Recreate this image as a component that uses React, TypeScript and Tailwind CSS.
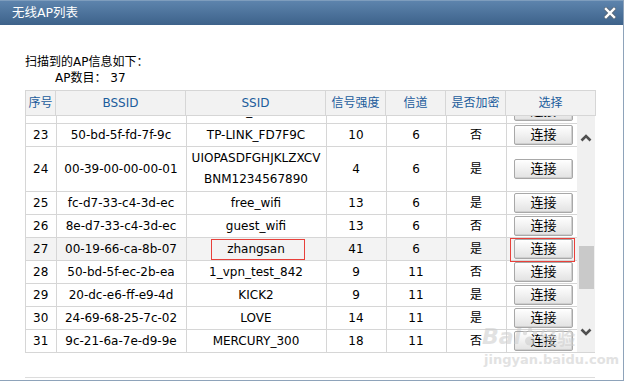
import React from 'react';

type Row = {
  no: string;
  bssid: string;
  ssid: React.ReactNode;
  signal: string;
  channel: string;
  enc: string;
  tall?: boolean;
  marked?: boolean;
};

const rows: Row[] = [
  { no: '22', bssid: '00-1d-0f-3a-22-16', ssid: 'wifi_home', signal: '7', channel: '6', enc: '是' },
  { no: '23', bssid: '50-bd-5f-fd-7f-9c', ssid: 'TP-LINK_FD7F9C', signal: '10', channel: '6', enc: '否' },
  {
    no: '24',
    bssid: '00-39-00-00-00-01',
    ssid: (
      <>
        UIOPASDFGHJKLZXCV
        <br />
        BNM1234567890
      </>
    ),
    signal: '4',
    channel: '6',
    enc: '是',
    tall: true,
  },
  { no: '25', bssid: 'fc-d7-33-c4-3d-ec', ssid: 'free_wifi', signal: '13', channel: '6', enc: '是' },
  { no: '26', bssid: '8e-d7-33-c4-3d-ec', ssid: 'guest_wifi', signal: '13', channel: '6', enc: '否' },
  { no: '27', bssid: '00-19-66-ca-8b-07', ssid: 'zhangsan', signal: '41', channel: '6', enc: '是', marked: true },
  { no: '28', bssid: '50-bd-5f-ec-2b-ea', ssid: '1_vpn_test_842', signal: '9', channel: '11', enc: '否' },
  { no: '29', bssid: '20-dc-e6-ff-e9-4d', ssid: 'KICK2', signal: '9', channel: '11', enc: '是' },
  { no: '30', bssid: '24-69-68-25-7c-02', ssid: 'LOVE', signal: '14', channel: '11', enc: '是' },
  { no: '31', bssid: '9c-21-6a-7e-d9-9e', ssid: 'MERCURY_300', signal: '18', channel: '11', enc: '否' },
  { no: '32', bssid: 'c8-3a-35-0b-11-60', ssid: 'Tenda_0B1160', signal: '5', channel: '1', enc: '是' },
];

const headers = ['序号', 'BSSID', 'SSID', '信号强度', '信道', '是否加密', '选择'];

const ConnectButton = () => (
  <button className="w-[59px] h-[20px] border border-[#a8a8a8] rounded-[2px] bg-linear-to-b from-white to-[#e2e2e2] shadow-[inset_-1px_-1px_0_#cfcfcf] text-[13px] leading-[18px] text-black">
    连接
  </button>
);

const CloseIcon = () => (
  <svg width="12" height="12" viewBox="0 0 12 12">
    <path d="M2 2 L10 10 M10 2 L2 10" stroke="#5b6b7c" strokeWidth="4.2" strokeLinecap="square" />
    <path d="M2 2 L10 10 M10 2 L2 10" stroke="#ffffff" strokeWidth="2.4" strokeLinecap="square" />
  </svg>
);

const Chevron = ({ up }: { up?: boolean }) => (
  <svg width="12" height="8" viewBox="0 0 12 8">
    <polyline
      points={up ? '1.5,6.5 6,2 10.5,6.5' : '1.5,1.5 6,6 10.5,1.5'}
      fill="none"
      stroke="#505050"
      strokeWidth="2.6"
    />
  </svg>
);

export default function App() {
  const cell = 'border-r border-b border-[#d6d6d6] text-center p-0 align-middle';

  return (
    <div className="w-[626px] h-[382px] bg-white overflow-hidden font-['DejaVu_Sans','Noto_Sans_CJK_SC',sans-serif]">
      <div className="relative w-[624px] h-[381px] border-r border-b border-[#8ea3ba] flex flex-col">
        {/* Title bar */}
        <div className="h-[25px] shrink-0 flex items-center justify-between pl-[12px] pr-[7px] bg-linear-to-b from-[#5d84ad] to-[#3d628a] border-t border-[#7e9dbd]">
          <span className="text-white text-[12.5px] leading-none">无线AP列表</span>
          <CloseIcon />
        </div>

        <div className="pl-[25px] pt-[29px] text-[12px] text-black">
          <div className="leading-[16px]">扫描到的AP信息如下：</div>
          <div className="leading-[16px] pl-[30px]">AP数目： 37</div>

          {/* Table */}
          <div className="mt-[4px] w-[570px]">
            <table className="table-fixed border-collapse w-[570px]">
              <colgroup>
                <col className="w-[30px]" />
                <col className="w-[130px]" />
                <col className="w-[140px]" />
                <col className="w-[60px]" />
                <col className="w-[60px]" />
                <col className="w-[60px]" />
                <col className="w-[90px]" />
              </colgroup>
              <thead>
                <tr>
                  {headers.map((h) => (
                    <th
                      key={h}
                      className="h-[25px] p-0 border border-[#d6d6d6] bg-[#f2f2f2] text-[#1b5c9c] font-normal text-[12px] text-center whitespace-nowrap"
                    >
                      {h}
                    </th>
                  ))}
                </tr>
              </thead>
            </table>

            <div className="flex h-[237px] border-l border-b border-[#d6d6d6]">
              <div className="w-[552px] overflow-hidden">
                <table className="table-fixed border-collapse w-[552px] -mt-[16px]">
                  <colgroup>
                    <col className="w-[30px]" />
                    <col className="w-[130px]" />
                    <col className="w-[140px]" />
                    <col className="w-[60px]" />
                    <col className="w-[60px]" />
                    <col className="w-[60px]" />
                    <col className="w-[72px]" />
                  </colgroup>
                  <tbody>
                    {rows.map((r) => (
                      <tr key={r.no} className={r.marked ? 'bg-[#f3f3f3]' : ''}>
                        <td className={`${cell} ${r.tall ? 'h-[45px]' : 'h-[23px]'}`}>{r.no}</td>
                        <td className={`${cell} whitespace-nowrap`}>{r.bssid}</td>
                        <td className={`${cell} relative whitespace-nowrap ${r.tall ? 'leading-[21px]' : ''}`}>
                          {r.ssid}
                          {r.marked && (
                            <span className="absolute left-[24px] top-[1px] w-[94px] h-[21px] border border-[#e8403a]" />
                          )}
                        </td>
                        <td className={cell}>{r.signal}</td>
                        <td className={cell}>{r.channel}</td>
                        <td className={cell}>{r.enc}</td>
                        <td className={`${cell} relative`}>
                          <div className="flex justify-center pl-[3px]">
                            <ConnectButton />
                          </div>
                          {r.marked && (
                            <span className="absolute left-[3px] top-[0px] w-[65px] h-[24px] border border-[#e8403a]" />
                          )}
                        </td>
                      </tr>
                    ))}
                  </tbody>
                </table>
              </div>

              {/* Scrollbar */}
              <div className="w-[18px] bg-[#f0f0f0] flex flex-col items-center">
                <div className="mt-[18px] h-[8px] flex items-center">
                  <Chevron up />
                </div>
                <div className="mt-[104px] w-[15px] h-[43px] bg-[#c9c9c9]" />
                <div className="mt-[39px] h-[8px] flex items-center">
                  <Chevron />
                </div>
              </div>
            </div>

            <div className="mt-[24px] h-[1px] bg-[#dcdcdc]" />
          </div>
        </div>

        {/* watermark */}
        <div className="absolute left-[482px] top-[326px] pointer-events-none select-none text-[#cfcfcf] opacity-60">
          <div className="flex items-end leading-none">
            <span className="text-[22px] font-bold italic">Bai</span>
            <svg width="18" height="20" viewBox="0 0 18 20" className="mb-[1px]">
              <circle cx="4" cy="6" r="2.2" fill="#cfcfcf" />
              <circle cx="9" cy="3" r="2.2" fill="#cfcfcf" />
              <circle cx="14" cy="6" r="2.2" fill="#cfcfcf" />
              <ellipse cx="9" cy="14" rx="5" ry="4.5" fill="#cfcfcf" />
            </svg>
            <span className="text-[18px] font-bold">经验</span>
          </div>
          <div className="text-[13px] font-bold leading-none mt-[5px] ml-[2px]">jingyan.baidu.com</div>
        </div>
      </div>
    </div>
  );
}
